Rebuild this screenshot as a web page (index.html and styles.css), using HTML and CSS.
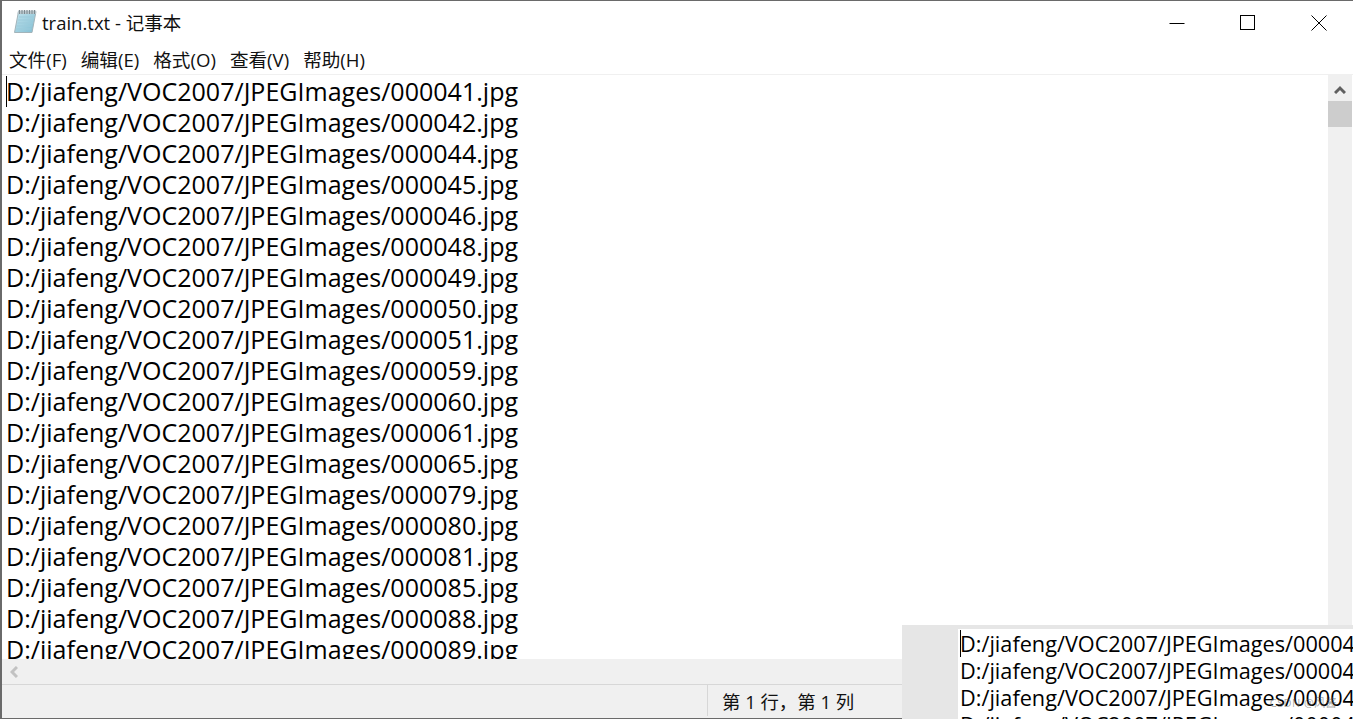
FILE: index.html
```html
<!DOCTYPE html>
<html lang="zh">
<head>
<meta charset="utf-8">
<title>train.txt - 记事本</title>
<link rel="stylesheet" href="styles.css">
</head>
<body>
<div class="window">
  <header class="titlebar">
    <div class="title">
      <svg class="app-icon" width="24" height="25" viewBox="0 0 24 25">
        <defs>
          <linearGradient id="page" x1="0" y1="0" x2="1" y2="1">
            <stop offset="0" stop-color="#c4e4ee"/>
            <stop offset="1" stop-color="#7fbdd2"/>
          </linearGradient>
        </defs>
        <path d="M5.500 2.500H23L19 23.500H1.500z" fill="url(#page)" stroke="#a3b4ba" stroke-width="1"/>
        <path d="M6 8h15M5.200 11h15M4.500 14h15M3.800 17h15M3.200 20h15" stroke="#9ccbdb" stroke-width="1"/>
        <path d="M5 1.500h18v3.500H4.500z" fill="#b9c6cc"/>
        <path d="M6.500 1v4M9 1v4M11.500 1v4M14 1v4M16.500 1v4M19 1v4M21.500 1v4" stroke="#7d8a90" stroke-width="1"/>
      </svg>
      <span>train.txt - 记事本</span>
    </div>
    <div class="controls">
      <svg class="ctl" width="16" height="16" viewBox="0 0 16 16"><path d="M0.500 8.500h15" stroke="#000" fill="none"/></svg>
      <svg class="ctl" width="16" height="16" viewBox="0 0 16 16"><rect x="0.500" y="0.500" width="14" height="14" stroke="#000" fill="none"/></svg>
      <svg class="ctl" width="16" height="16" viewBox="0 0 16 16"><path d="M0.500 0.500l15 15M15.500 0.500l-15 15" stroke="#000" fill="none"/></svg>
    </div>
  </header>
  <nav class="menubar">
    <span>文件(F)</span><span>编辑(E)</span><span>格式(O)</span><span>查看(V)</span><span>帮助(H)</span>
  </nav>
  <main class="editor">
    <div class="text">
      <i class="caret"></i>
      <div>D:/jiafeng/VOC2007/JPEGImages/000041.jpg</div>
      <div>D:/jiafeng/VOC2007/JPEGImages/000042.jpg</div>
      <div>D:/jiafeng/VOC2007/JPEGImages/000044.jpg</div>
      <div>D:/jiafeng/VOC2007/JPEGImages/000045.jpg</div>
      <div>D:/jiafeng/VOC2007/JPEGImages/000046.jpg</div>
      <div>D:/jiafeng/VOC2007/JPEGImages/000048.jpg</div>
      <div>D:/jiafeng/VOC2007/JPEGImages/000049.jpg</div>
      <div>D:/jiafeng/VOC2007/JPEGImages/000050.jpg</div>
      <div>D:/jiafeng/VOC2007/JPEGImages/000051.jpg</div>
      <div>D:/jiafeng/VOC2007/JPEGImages/000059.jpg</div>
      <div>D:/jiafeng/VOC2007/JPEGImages/000060.jpg</div>
      <div>D:/jiafeng/VOC2007/JPEGImages/000061.jpg</div>
      <div>D:/jiafeng/VOC2007/JPEGImages/000065.jpg</div>
      <div>D:/jiafeng/VOC2007/JPEGImages/000079.jpg</div>
      <div>D:/jiafeng/VOC2007/JPEGImages/000080.jpg</div>
      <div>D:/jiafeng/VOC2007/JPEGImages/000081.jpg</div>
      <div>D:/jiafeng/VOC2007/JPEGImages/000085.jpg</div>
      <div>D:/jiafeng/VOC2007/JPEGImages/000088.jpg</div>
      <div>D:/jiafeng/VOC2007/JPEGImages/000089.jpg</div>
    </div>
    <div class="vscroll">
      <svg class="arrow-up" width="12" height="9" viewBox="0 0 12 9"><path d="M1 8l5-5 5 5" fill="none" stroke="#606060" stroke-width="3"/></svg>
      <div class="thumb"></div>
    </div>
  </main>
  <div class="hscroll">
    <svg width="8" height="12" viewBox="0 0 8 12"><path d="M7 1L2 6l5 5" fill="none" stroke="#c2c2c2" stroke-width="3"/></svg>
  </div>
  <footer class="statusbar">
    <div class="status-cell">第 1 行，第 1 列</div>
  </footer>
</div>
<aside class="preview">
  <div class="preview-page">
    <i class="caret preview-caret"></i>
    <div>D:/jiafeng/VOC2007/JPEGImages/000041.jpg</div>
    <div>D:/jiafeng/VOC2007/JPEGImages/000042.jpg</div>
    <div>D:/jiafeng/VOC2007/JPEGImages/000044.jpg</div>
    <div>D:/jiafeng/VOC2007/JPEGImages/000045.jpg</div>
  </div>
  <span class="watermark">CSDN @风酱</span>
</aside>
</body>
</html>
```
FILE: styles.css
```css
html, body {
  margin: 0;
  height: 100%;
  overflow: hidden;
  background: #fff;
}
body {
  position: relative;
  font-family: "Open Sans", "Noto Sans CJK SC", sans-serif;
  color: #000;
}
.window {
  box-sizing: border-box;
  height: 719px;
  display: flex;
  flex-direction: column;
  border-top: 1px solid #6a6a6a;
  border-bottom: 1px solid #6a6a6a;
  border-left: 2px solid #6a6a6a;
}
.titlebar {
  height: 44px;
  flex: none;
  display: flex;
  justify-content: space-between;
  align-items: center;
}
.title {
  display: flex;
  align-items: center;
  gap: 5px;
  padding-left: 11px;
  font-size: 18.500px;
  line-height: 26px;
  color: #111;
}
.app-icon {
  display: block;
  margin-bottom: 3px;
}
.controls {
  display: flex;
  gap: 55px;
  padding-right: 26px;
}
.ctl { display: block; }
.menubar {
  height: 29px;
  flex: none;
  display: flex;
  gap: 14px;
  padding-left: 7px;
  align-items: center;
  font-size: 18.600px;
  line-height: 26px;
  color: #111;
  border-bottom: 1px solid #f0f0f0;
}
.editor {
  flex: 1;
  min-height: 0;
  display: flex;
  overflow: hidden;
}
.text {
  position: relative;
  flex: 1;
  padding: 1px 0 0 4px;
  font-size: 25.040px;
  line-height: 31px;
  white-space: nowrap;
  overflow: hidden;
}
.caret {
  position: absolute;
  left: 4px;
  top: 1px;
  width: 1px;
  height: 31px;
  background: #000;
}
.vscroll {
  width: 24px;
  flex: none;
  margin-right: 1px;
  background: #f0f0f0;
  position: relative;
  padding-top: 26px;
}
.arrow-up {
  position: absolute;
  left: 6px;
  top: 10px;
}
.thumb {
  height: 26px;
  background: #cdcdcd;
}
.hscroll {
  height: 25px;
  flex: none;
  background: #f0f0f0;
  display: flex;
  align-items: center;
  padding-left: 8px;
  border-bottom: 1px solid #d7d7d7;
}
.statusbar {
  height: 33px;
  flex: none;
  box-sizing: border-box;
  padding: 0 0 2px 705px;
  background: #f0f0f0;
  display: flex;
}
.status-cell {
  border-left: 1px solid #d7d7d7;
  padding: 1px 0 0 14px;
  font-size: 18.400px;
  line-height: 32px;
  color: #111;
}
.preview {
  position: absolute;
  left: 902px;
  top: 625px;
  width: 451px;
  height: 94px;
  background: #e6e6e6;
  padding: 4px 0 0 56px;
  box-sizing: border-box;
}
.preview-page {
  position: relative;
  height: 90px;
  background: #fff;
  overflow: hidden;
  padding: 1px 0 0 2px;
  font-size: 21.700px;
  line-height: 27px;
  white-space: nowrap;
}
.preview-caret {
  left: 2px;
  top: 1px;
  height: 27px;
}
.watermark {
  position: absolute;
  right: 16px;
  bottom: 9px;
  font-size: 11px;
  letter-spacing: 0.400px;
  color: rgba(90, 90, 90, 0.55);
}
```
